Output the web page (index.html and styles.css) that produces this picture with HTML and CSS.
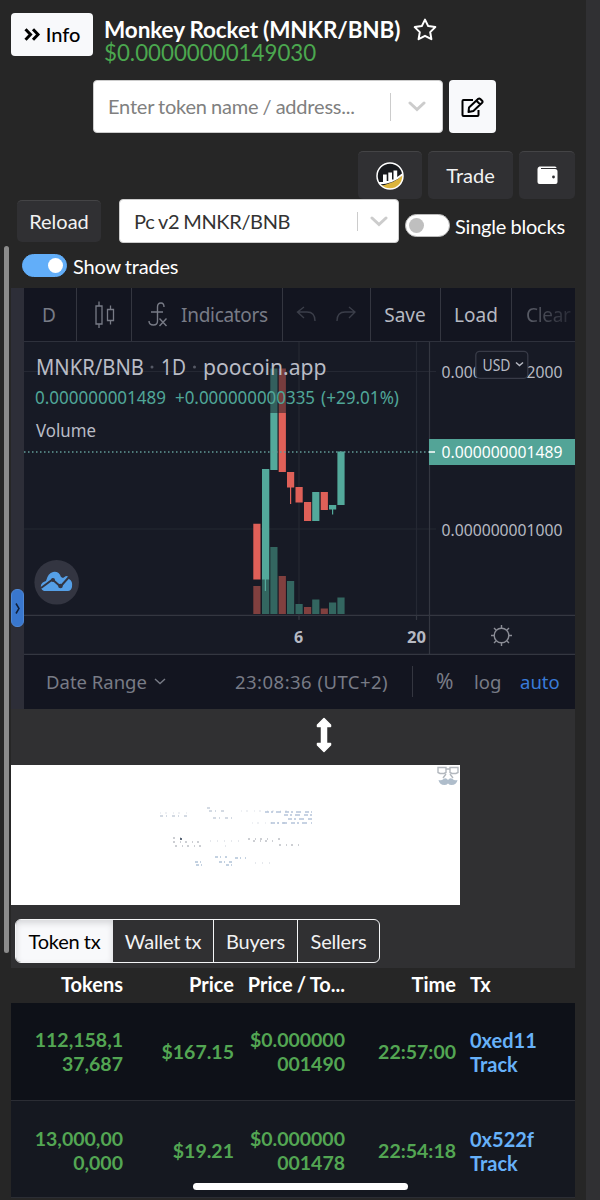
FILE: index.html
```html
<!DOCTYPE html>
<html lang="en">
<head>
<meta charset="utf-8">
<title>Monkey Rocket (MNKR/BNB)</title>
<link rel="stylesheet" href="styles.css">
</head>
<body>
<div class="page">
  <div class="scrollbar"></div>
  <header class="header">
    <button class="btn-light info"><svg width="17" height="13" viewBox="0 0 17 13" fill="none" stroke="#000" stroke-width="3"><path d="M1.5 1.3l5 5.2-5 5.2M9 1.3l5 5.2-5 5.2"/></svg><span>Info</span></button>
    <div class="title">
      <h1>Monkey Rocket (MNKR/BNB)</h1>
      <div class="price">$0.00000000149030</div>
    </div>
    <svg class="star" width="24" height="24" viewBox="0 0 24 24" fill="none" stroke="#fff" stroke-width="2" stroke-linejoin="round"><path d="M12 1.6l3.2 6.5 7.1 1-5.1 5 1.2 7.1-6.4-3.4-6.4 3.4 1.2-7.1-5.1-5 7.1-1z"/></svg>
  </header>

  <div class="search-row">
    <div class="select search">
      <span class="placeholder">Enter token name / address...</span>
      <i class="divider"></i>
      <svg class="chev" width="18" height="11" viewBox="0 0 18 11" fill="none" stroke="#ccc" stroke-width="3" stroke-linecap="round"><path d="M2 2l7 6.5L16 2"/></svg>
    </div>
    <button class="btn-light edit"><svg width="23" height="20" viewBox="0 0 23 20" fill="none" stroke="#000" stroke-width="2" stroke-linejoin="round"><path d="M12 3H2.5Q1.5 3 1.5 4v14Q1.5 19 2.5 19h14q1 0 1-1v-5"/><path d="M8 10.5L17.3 1.8Q18.3 1 19.3 2l1.8 1.8q1 1 0 2L12.4 14 7.5 15zM15.5 3.8l3.7 3.7"/></svg></button>
  </div>

  <div class="actions">
    <button class="btn-dark chart-link"><svg width="28" height="28" viewBox="0 0 28 28"><defs><clipPath id="disc"><circle cx="14" cy="14" r="13"/></clipPath></defs><g clip-path="url(#disc)"><circle cx="14" cy="14" r="13" fill="#17191d"/><path d="M2 24Q20 22 28 11v17H2z" fill="#dcb43c"/><path d="M0 20h7v-7.500h3.700V19h1.600v-8.500H16v7h1.500v-9h3.700V15L28 10v2Q18 22 3 22.500z" fill="#fff"/></g><circle cx="14" cy="14" r="13" fill="none" stroke="#fff" stroke-width="1.500"/></svg></button>
    <button class="btn-dark trade">Trade</button>
    <button class="btn-dark wallet"><svg width="21" height="19" viewBox="0 0 21 19"><path fill="#fff" d="M2.500.5H18q1.500 0 1.500 1.500H4v1h14q2.500 0 2.500 2.500v10.500q0 2-2 2h-16q-2 0-2-2v-13q0-2 2-2.500z"/><circle cx="16.500" cy="11" r="1.400" fill="#303033"/></svg></button>
  </div>

  <div class="controls">
    <button class="btn-dark reload">Reload</button>
    <div class="select pair">
      <span>Pc v2 MNKR/BNB</span>
      <i class="divider"></i>
      <svg class="chev" width="18" height="11" viewBox="0 0 18 11" fill="none" stroke="#ccc" stroke-width="3" stroke-linecap="round"><path d="M2 2l7 6.500L16 2"/></svg>
    </div>
    <div class="switch"><i></i></div><span class="single">Single blocks</span>
  </div>
  <div class="show-row"><div class="switch on"><i></i></div><span>Show trades</span></div>

  <section class="chart">
    <div class="gutter"><div class="handle"><svg width="5" height="11" viewBox="0 0 5 11" fill="none" stroke="#10203c" stroke-width="1.500"><path d="M1 .5q3 5 3 5t-3 5"/></svg></div></div>
    <div class="chart-main">
      <div class="toolbar">
        <div class="cell c-d">D</div>
        <div class="cell c-candle"><svg width="22" height="30" viewBox="0 0 22 30" fill="none" stroke="#787b86" stroke-width="1.300"><path d="M2 6h6v18H2zM5 1.500V6M5 24v4M13.500 9.500h6v11h-6zM16.500 5.500v4M16.500 20.500v4"/></svg></div>
        <div class="cell c-ind"><svg width="20" height="26" viewBox="0 0 20 26" fill="none" stroke="#787b86" stroke-width="1.400"><path d="M16 5q0-4-3-4-3.500 0-3.500 4v14q0 4-4 4Q1 23 1 19M3 10h12M11.500 16.500l7 7.500M18.500 16.500l-7 7.500"/></svg><span>Indicators</span></div>
        <div class="cell c-undo"><svg width="60" height="18" viewBox="0 0 60 18" fill="none" stroke="#3b3e49" stroke-width="1.400"><path d="M8 1L1.500 6 8 12M2 6h9q8 0 8 9M53 1l6 5-6 6M58 6H49q-8 0-8 9"/></svg></div>
        <div class="cell c-save">Save</div>
        <div class="cell c-load">Load</div>
        <div class="cell c-clear">Clear</div>
      </div>
      <svg class="plot" width="551" height="313" viewBox="24 342 551 313">
        <g stroke="#252833" stroke-width="1.200">
          <path d="M24 371.500H436M24 529H436M299 342V619M416.500 342V619"/>
        </g>
        <g stroke="#343741" stroke-width="1.200"><path d="M24 615.300H575M24 654.300H575M429.500 342V655M416.500 615v5M299 615v5"/></g>
        <g fill="#336660">
          <path d="M262 579h7.300v35H262zM270.300 547h7.200v67h-7.200zM287 581h7.200v33H287zM295.500 604h7.200v10h-7.200zM312.200 599.500h7.200V614h-7.200zM329 602.500h7.200V614H329zM337.400 597.500h7.200V614h-7.200z"/>
        </g>
        <path fill="#80403f" d="M253.300 586h7.200v28h-7.200zM278.700 576h7.200v38h-7.200zM304 607h7.200v7H304zM320.700 608.500h7.200v5.500h-7.200z"/>
        <path fill="#53a99b" d="M262 469h7.300v110.500H262zM264.800 579h1.200v12h-1.200zM270.300 368.500h7.200V470h-7.200zM312.200 492h7.200v29h-7.200zM329 505h7.200v4.500H329zM332 509h1.200v5.500H332zM337.400 451.500h7.200V505h-7.200z"/>
        <path fill="#df6058" d="M253.300 523.700h7.200v55.800h-7.200zM278.700 368.500h7.200V472h-7.200zM287 472h7.200v15.500H287zM290 487h1.200v17H290zM295.500 487h7.200v15.500h-7.200zM304 502h7.200v19H304zM320.700 492h7.200v18h-7.200z"/>
        <path fill="#171a25" opacity=".52" d="M262 368h26v45h-26z"/>
        <path d="M24 452H429" stroke="#639c98" stroke-width="1.300" stroke-dasharray="1.500 2.500"/>
        <path d="M429 439H575v26H429z" fill="#53a497"/>
        <path d="M429 452h6" stroke="#fff" stroke-width="1.500"/>
        <g class="legend">
          <text x="36" y="374.500" textLength="108" lengthAdjust="spacingAndGlyphs" font-size="22">MNKR/BNB</text>
          <circle cx="152" cy="367" r="1.500" fill="#555965"/>
          <text x="161" y="374.500" textLength="25" lengthAdjust="spacingAndGlyphs" font-size="22">1D</text>
          <circle cx="194.500" cy="367" r="1.500" fill="#555965"/>
          <text x="203" y="374.500" textLength="123.500" lengthAdjust="spacingAndGlyphs" font-size="21.500">poocoin.app</text>
          <text x="36" y="431" dy="6" textLength="60" lengthAdjust="spacingAndGlyphs" font-size="17.500">Volume</text>
        </g>
        <g fill="#50a698" font-size="17.500">
          <text x="35" y="404" textLength="131" lengthAdjust="spacingAndGlyphs">0.000000001489</text>
          <text x="175" y="404" textLength="140" lengthAdjust="spacingAndGlyphs">+0.000000000335</text>
          <text x="321" y="404" textLength="78" lengthAdjust="spacingAndGlyphs">(+29.01%)</text>
        </g>
        <g fill="#b6b9c2" font-size="17">
          <text x="441.500" y="378" textLength="121" lengthAdjust="spacingAndGlyphs">0.000000002000</text>
          <text x="441.500" y="536" textLength="121" lengthAdjust="spacingAndGlyphs">0.000000001000</text>
          <text x="441.500" y="458" fill="#fff" textLength="121" lengthAdjust="spacingAndGlyphs">0.000000001489</text>
          <g font-weight="bold" font-size="16"><text x="294" y="642.500">6</text><text x="407" y="642.500" textLength="19" lengthAdjust="spacingAndGlyphs">20</text></g>
        </g>
        <rect x="475.800" y="351.300" width="52" height="27" rx="4" fill="#171a25" stroke="#383b47" stroke-width="1.300"/>
        <text x="482.500" y="370.500" font-size="17" fill="#b6b9c2" textLength="28" lengthAdjust="spacingAndGlyphs">USD</text>
        <path d="M516 362.500l3.500 3 3.500-3" fill="none" stroke="#b6b9c2" stroke-width="1.500"/>
        <circle cx="56.700" cy="582.300" r="22.300" fill="#333541"/>
        <path fill="#559fe6" d="M44 591q-4-2-3-6 1-3 5-4 2-8 7-9 6-1 8 5l2 1 3-2q3 0 3 3 4 2 3 8-1 4-4 4H46z"/>
        <path d="M41 588l11.500-8.500 8 7L69 577" fill="none" stroke="#333541" stroke-width="2"/><circle cx="53" cy="580" r="2" fill="#333541"/><circle cx="60.500" cy="586" r="2.300" fill="#333541"/>
        <g fill="none" stroke="#8b8d96" stroke-width="1.400"><circle cx="501.500" cy="635.500" r="7.300"/><path d="M501.500 625v3M501.500 643v3M491 635.500h3M509 635.500h3M494 628l2 2M507 641l2 2M509 628l-2 2M496 641l-2 2"/></g>
      </svg>
      <div class="bottom-bar">
        <span class="range">Date Range</span><svg width="12" height="7" viewBox="0 0 12 7" fill="none" stroke="#787b86" stroke-width="1.400"><path d="M1 1l5 4.500L11 1"/></svg>
        <span class="clock">23:08:36 (UTC+2)</span><i class="sep"></i><span class="pct">%</span><span class="log">log</span><span class="auto">auto</span>
      </div>
    </div>
  </section>

  <section class="middle">
    <svg class="resize" width="16" height="36" viewBox="0 0 16 36" fill="#fff" stroke="#fff" stroke-width="1.500" stroke-linejoin="round"><path d="M8 1.500l6.500 6.500v1.500h-4v17h4V28L8 34.500 1.500 28v-1.500h4v-17h-4V8z"/></svg>
    <div class="ad">
      <svg width="449" height="140" viewBox="11 765 449 140" fill="none">
        <g stroke="#a8b5c7" stroke-width="1">
          <path d="M160 813h30M241 811h48M252 823h34" stroke-dasharray="1 4 2 6" stroke="#dde1e8"/>
          <path d="M160 816h28M207 808h5M209 811h15M213 818h20" stroke-dasharray="3 3 1 5"/>
          <path d="M265 812h47M284 815h28M288 819h24M271 823h41" stroke-dasharray="4 2 2 3 5 4" stroke="#8fa6c7"/>
          <path d="M173 838h8M173 842h30M175 846h29M248 839h24M253 841h20M278 839h3M279 845h20" stroke-dasharray="2 5 1 4" stroke="#9a9ea7"/>
          <path d="M195 862h9M196 865h8M215 857h12M219 862h15M226 865h10M235 858h11" stroke-dasharray="3 2 1 4" stroke="#88a4c3"/>
          <path d="M255 863h20M210 841h31M225 846h7" stroke-dasharray="1 6" stroke="#ccd1da"/>
          <path d="M180 839h2" stroke="#28384f" stroke-width="1.500"/>
        </g>
        <g stroke="#b3b8be" stroke-width="1.400"><path d="M438 767.500h8v5l-2 1h-4l-2-1zM450 767.500h8v5l-2 1h-4l-2-1zM446 769h4M446 774l-3 4M450 774l3 4"/></g>
        <path fill="#afbdcb" d="M438.500 780q3 1 5-1 2.500-2 4.500 1 2-3 4.500-1 2 2 5 1-1 5-6 5-2 0-3.500-1.500Q446.500 785 444.500 785q-5 0-6-5z"/>
      </svg>
    </div>
    <nav class="tabs"><span class="tab active">Token tx</span><span class="tab wtx">Wallet tx</span><span class="tab buy">Buyers</span><span class="tab sell">Sellers</span></nav>
  </section>

  <section class="table">
    <div class="row head"><span>Tokens</span><span>Price</span><span>Price / To...</span><span>Time</span><span class="tx">Tx</span></div>
    <div class="row r1"><span>112,158,1<br>37,687</span><span>$167.15</span><span>$0.000000<br>001490</span><span>22:57:00</span><span class="tx">0xed11<br>Track</span></div>
    <div class="row r2"><span>13,000,00<br>0,000</span><span>$19.21</span><span>$0.000000<br>001478</span><span>22:54:18</span><span class="tx">0x522f<br>Track</span></div>
  </section>
  <div class="home-bar"></div>
</div>
</body>
</html>
```
FILE: styles.css
```css
* { box-sizing: border-box; }
body { margin: 0; background: #303033; font-family: Lato, sans-serif; font-size: 20px; letter-spacing: -0.2px; word-spacing: -0.7px; color: #fff; }
.page { position: relative; width: 586px; height: 1200px; overflow: hidden; background: #262626; display: flex; flex-direction: column; }
button { border: 0; padding: 0; margin: 0; font: inherit; color: inherit; display: flex; align-items: center; justify-content: center; flex: none; }
svg { display: block; flex: none; }
.scrollbar { position: absolute; left: 4px; top: 246px; width: 5px; height: 707px; border-radius: 3px; background: #8b8b8b; }
.btn-light { background: #f8f9fb; color: #000; border-radius: 4px; }
.btn-dark { background: #303033; border-radius: 5px; border-top: 1px solid #444446; color: #f2f2f2; }

.header { display: flex; height: 67px; padding: 13px 0 0 11px; flex: none; }
.info { width: 82px; height: 43px; gap: 5px; font-weight: 500; }
.info span { margin-top: -2px; }
.title { margin-left: 11px; padding-top: 6px; width: 298px; white-space: nowrap; }
h1 { margin: 0; font-size: 22.5px; line-height: 22px; font-weight: 700; letter-spacing: -0.1px; word-spacing: -0.3px; }
.price { font-size: 22.3px; line-height: 24px; letter-spacing: 0; color: #4ba84f; }
.star { margin: 5px 0 0 11px; }

.search-row { display: flex; gap: 6px; padding: 13px 0 0 93px; flex: none; }
.select { display: flex; align-items: center; background: #fff; color: #333; border: 1px solid #ccc; border-radius: 4px; white-space: nowrap; }
.search { width: 350px; height: 53px; padding-left: 14px; }
.placeholder { color: #808080; width: 282px; margin-top: -1px; }
.divider { width: 1px; background: #ccc; }
.search .divider { height: 28px; margin-right: 17px; }
.edit { width: 47px; height: 53px; }

.actions { display: flex; gap: 6px; justify-content: flex-end; margin-top: 18px; padding-right: 11px; flex: none; }
.actions button { height: 48px; }
.chart-link { width: 64px; }
.trade { width: 85px; padding-bottom: 2px; }
.wallet { width: 56px; padding-bottom: 1px; }

.controls { display: flex; height: 44px; padding-left: 17px; flex: none; }
.reload { width: 84px; height: 42px; margin-top: 1px; padding-bottom: 2px; }
.pair { width: 280px; height: 44px; margin-left: 18px; padding-left: 14px; }
.pair span { width: 223px; letter-spacing: -0.35px; }
.pair .divider { height: 19px; margin-right: 12px; }
.switch { width: 45px; height: 23px; border-radius: 12px; background: #fff; border: 1px solid #bbb; padding: 3px; display: flex; flex: none; }
.switch i { width: 15px; height: 15px; border-radius: 50%; background: #bfbfbf; }
.switch.on { background: #62aef9; border-color: #62aef9; justify-content: flex-end; }
.switch.on i { background: #fff; }
.controls .switch { margin: 15px 5px 0 6px; }
.single { line-height: 24px; margin-top: 15px; white-space: nowrap; }
.show-row { display: flex; gap: 6px; height: 45px; padding: 11px 0 0 22px; line-height: 24px; flex: none; }

.chart { display: flex; width: 564px; height: 421px; margin-left: 11px; flex: none; font-family: "Noto Sans", "Open Sans", sans-serif; letter-spacing: 0; word-spacing: 0; }
.gutter { width: 13px; background: #2d2e38; padding-top: 301px; }
.handle { width: 13px; height: 38px; border-radius: 6px; background: #3977ce; border: 1px solid #4e88d6; display: flex; align-items: center; justify-content: center; }
.chart-main { width: 551px; background: #151722; display: flex; flex-direction: column; }
.toolbar { display: flex; height: 54px; border-bottom: 1px solid #2e313c; background: #131520; overflow: hidden; font-size: 19px; color: #787b86; flex: none; }
.cell { display: flex; align-items: center; justify-content: center; border-right: 1px solid #343640; flex: none; }
.c-d { width: 53px; padding-right: 2px; }
.c-candle { width: 55px; padding-left: 2px; }
.c-ind { width: 151px; gap: 13px; padding-left: 2px; letter-spacing: -0.3px; }
.c-undo { width: 88px; padding-right: 2px; }
.c-save { width: 70px; padding-right: 1px; color: #b6b9c2; }
.c-load { width: 71px; color: #b6b9c2; }
.c-clear { width: 63px; border: 0; padding-left: 14px; justify-content: flex-start; background: linear-gradient(90deg, #5c5f69 20%, #272934 95%); background-clip: text; color: transparent; letter-spacing: -0.3px; }
.plot { background: #171a25; }
.legend { fill: #b9bcc5; }
.bottom-bar { display: flex; align-items: center; height: 54px; background: #131520; color: #787b86; font-size: 18.5px; padding: 0 0 2px 22px; white-space: nowrap; }
.range { width: 108px; }
.clock { width: 177px; margin-left: 69px; letter-spacing: 0.47px; }
.sep { width: 1px; height: 31px; background: #343640; margin-right: 23px; }
.pct { width: 38px; font-size: 21px; }
.log { width: 46px; }
.auto { color: #397bd8; }

.middle { width: 564px; height: 259px; margin-left: 11px; background: #303032; padding-top: 8px; flex: none; }
.resize { margin-left: 305px; }
.ad { width: 449px; height: 140px; margin-top: 12px; background: #fff; }
.tabs { display: flex; width: 365px; height: 44px; margin: 14px 0 0 4px; border: 1.5px solid #f4f5f7; border-radius: 6px; overflow: hidden; color: #f2f2f2; }
.tab { display: flex; align-items: center; justify-content: center; border-left: 1px solid #f4f5f7; white-space: nowrap; flex: none; }
.active { width: 97px; background: #f8f9fb; color: #000; border: 0; box-shadow: inset 0 3px 6px #d4d5d8; }
.wtx { width: 100px; border: 0; }
.buy { width: 84px; }
.sell { flex: 1; }

.table { width: 564px; margin-left: 11px; font-weight: 700; letter-spacing: 0; flex: none; }
.row { display: grid; grid-template-columns: 112px 111px 111px 111px 119px; align-items: center; text-align: right; line-height: 24px; font-size: 19.5px; color: #53a653; white-space: nowrap; }
.row .tx { text-align: left; padding-left: 14px; font-size: 20px; color: #67b1f9; }
.head { height: 35px; padding-bottom: 3px; font-size: 20px; color: #fff; }
.head .tx { color: #fff; }
.r1 { height: 97px; background: #0e1118; padding-top: 1px; }
.r2 { height: 98px; background: #151820; border-top: 1px solid #2b2d34; border-bottom: 1px solid #2b2d34; padding-top: 3px; }
.home-bar { position: absolute; left: 193px; top: 1183px; width: 215px; height: 7px; border-radius: 4px; background: #fff; }
```
